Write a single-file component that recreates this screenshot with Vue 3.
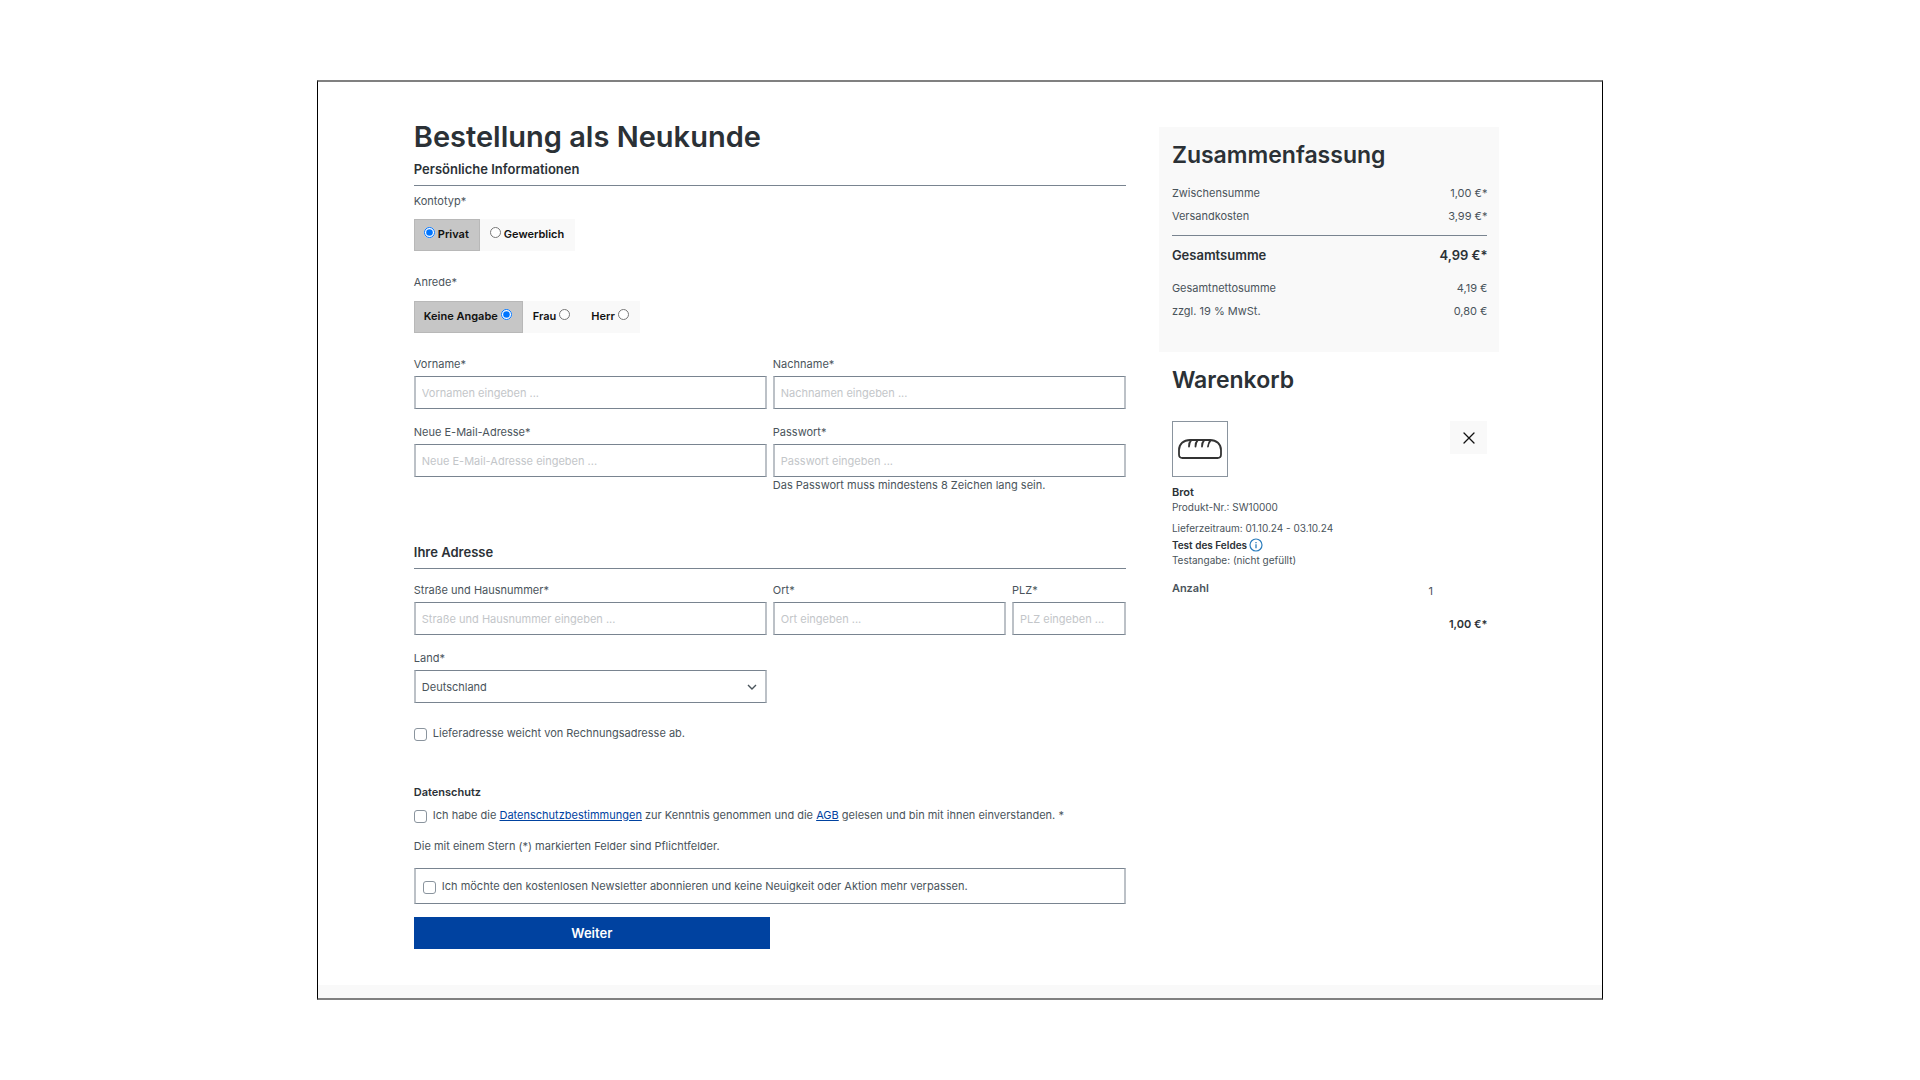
<script setup>
import { ref } from 'vue'

const accountType = ref('privat')
const salutation = ref('keine')
const country = ref('de')

const accountTypes = [
  { value: 'privat', label: 'Privat' },
  { value: 'gewerblich', label: 'Gewerblich' },
]
const salutations = [
  { value: 'keine', label: 'Keine Angabe' },
  { value: 'frau', label: 'Frau' },
  { value: 'herr', label: 'Herr' },
]
</script>

<template>
  <div class="frame">
    <div class="page">
      <main class="checkout">
        <h1>Bestellung als Neukunde</h1>
        <form @submit.prevent>
          <section>
            <h2>Persönliche Informationen</h2>

            <fieldset class="choice">
              <legend>Kontotyp*</legend>
              <div class="segments">
                <label v-for="t in accountTypes" :key="t.value" :class="{ active: accountType === t.value }">
                  <input v-model="accountType" type="radio" name="accountType" :value="t.value" />
                  <span>{{ t.label }}</span>
                </label>
              </div>
            </fieldset>

            <fieldset class="choice second">
              <legend>Anrede*</legend>
              <div class="segments trailing">
                <label v-for="s in salutations" :key="s.value" :class="{ active: salutation === s.value }">
                  <span>{{ s.label }}</span>
                  <input v-model="salutation" type="radio" name="salutation" :value="s.value" />
                </label>
              </div>
            </fieldset>

            <div class="fields personal">
              <div class="field">
                <label for="firstName">Vorname*</label>
                <input id="firstName" type="text" placeholder="Vornamen eingeben ..." />
              </div>
              <div class="field">
                <label for="lastName">Nachname*</label>
                <input id="lastName" type="text" placeholder="Nachnamen eingeben ..." />
              </div>
              <div class="field">
                <label for="email">Neue E-Mail-Adresse*</label>
                <input id="email" type="email" placeholder="Neue E-Mail-Adresse eingeben ..." />
              </div>
              <div class="field">
                <label for="password">Passwort*</label>
                <input id="password" type="password" placeholder="Passwort eingeben ..." aria-describedby="passwordHelp" />
                <p id="passwordHelp" class="help">Das Passwort muss mindestens 8 Zeichen lang sein.</p>
              </div>
            </div>
          </section>

          <section class="address">
            <h2>Ihre Adresse</h2>
            <div class="fields">
              <div class="field">
                <label for="street">Straße und Hausnummer*</label>
                <input id="street" type="text" placeholder="Straße und Hausnummer eingeben ..." />
              </div>
              <div class="town">
                <div class="field">
                  <label for="city">Ort*</label>
                  <input id="city" type="text" placeholder="Ort eingeben ..." />
                </div>
                <div class="field">
                  <label for="zip">PLZ*</label>
                  <input id="zip" type="text" placeholder="PLZ eingeben ..." />
                </div>
              </div>
              <div class="field">
                <label for="country">Land*</label>
                <div class="select">
                  <select id="country" v-model="country">
                    <option value="de">Deutschland</option>
                  </select>
                  <svg viewBox="0 0 10 6" width="10" height="6" aria-hidden="true">
                    <path d="M1 1l4 4 4-4" fill="none" stroke="#4a545b" stroke-width="1.4" />
                  </svg>
                </div>
              </div>
            </div>
            <div class="check delivery">
              <input id="delivery" type="checkbox" />
              <label for="delivery">Lieferadresse weicht von Rechnungsadresse ab.</label>
            </div>
          </section>

          <section class="privacy">
            <h3>Datenschutz</h3>
            <div class="check">
              <input id="privacy" type="checkbox" />
              <label for="privacy">Ich habe die <a href="#datenschutz">Datenschutzbestimmungen</a> zur Kenntnis genommen und die <a href="#agb">AGB</a> gelesen und bin mit ihnen einverstanden. *</label>
            </div>
            <p class="required">Die mit einem Stern (*) markierten Felder sind Pflichtfelder.</p>
            <div class="check newsletter">
              <input id="newsletter" type="checkbox" />
              <label for="newsletter">Ich möchte den kostenlosen Newsletter abonnieren und keine Neuigkeit oder Aktion mehr verpassen.</label>
            </div>
            <button type="submit" class="submit">Weiter</button>
          </section>
        </form>
      </main>

      <aside>
        <section class="summary">
          <h2>Zusammenfassung</h2>
          <dl>
            <div><dt>Zwischensumme</dt><dd>1,00 €*</dd></div>
            <div><dt>Versandkosten</dt><dd>3,99 €*</dd></div>
            <div class="total"><dt>Gesamtsumme</dt><dd>4,99 €*</dd></div>
            <div><dt>Gesamtnettosumme</dt><dd>4,19 €</dd></div>
            <div><dt>zzgl. 19 % MwSt.</dt><dd>0,80 €</dd></div>
          </dl>
        </section>

        <section class="cart">
          <h2>Warenkorb</h2>
          <div class="item-top">
            <div class="thumb">
              <svg viewBox="0 0 44 20" width="44" height="20" role="img" aria-label="Brot">
                <g fill="none" stroke="#333" stroke-width="1.8" stroke-linecap="round">
                  <path d="M12 1h20c6.500 0 11 4 11 10v4.500q0 3.500-3.500 3.500h-35Q1 19 1 15.500V11C1 5 5.500 1 12 1z" />
                  <path d="M13 1.500q-2 2-2 6M19.500 1.500q-2 2-2 6M26 1.500q-2 2-2 6M32.500 1.500q-2 2-2.500 6" />
                </g>
              </svg>
            </div>
            <button type="button" class="remove" aria-label="Entfernen">
              <svg viewBox="0 0 12 12" width="12" height="12" aria-hidden="true">
                <path d="M1 1l10 10M11 1L1 11" stroke="#111" stroke-width="1.3" stroke-linecap="round" />
              </svg>
            </button>
          </div>
          <h3>Brot</h3>
          <p class="small">Produkt-Nr.: SW10000</p>
          <p class="small period">Lieferzeitraum: 01.10.24 - 03.10.24</p>
          <p class="test">
            Test des Feldes
            <svg viewBox="0 0 14 14" width="14" height="14" aria-hidden="true">
              <circle cx="7" cy="7" r="6" fill="none" stroke="#2b7dbd" stroke-width="1.2" />
              <path d="M7 6.200v4M7 4v1.200" stroke="#2b7dbd" stroke-width="1.300" />
            </svg>
          </p>
          <p class="small">Testangabe: (nicht gefüllt)</p>
          <div class="quantity">
            <span class="name">Anzahl</span>
            <span class="count">1</span>
          </div>
          <p class="price">1,00 €*</p>
        </section>
      </aside>
    </div>
    <footer></footer>
  </div>
</template>

<style>
body {
  margin: 0;
  background: #fff;
}
</style>

<style scoped>
.frame,
.frame * {
  box-sizing: border-box;
}
.frame {
  margin: 80px auto;
  width: 67%;
  border: solid;
  border-width: 2px 1px;
  border-color: #808080 #000;
  font: 11px/16px Inter, "Liberation Sans", sans-serif;
  color: #4a545b;
}
.page {
  display: flex;
  gap: 33px;
  padding: 37px 8% 36px 96px;
}
.checkout {
  flex: 713 1 0;
  min-width: 0;
}
aside {
  flex: 341 1 0;
  min-width: 0;
  padding-top: 8px;
}
h1,
h2,
h3,
p,
dl,
dd {
  margin: 0;
}
h1,
h2,
h3 {
  font-weight: 600;
  color: #2b3136;
}
h1 {
  font-size: 29px;
  line-height: 36px;
}
.checkout h2 {
  margin-top: 4px;
  padding-bottom: 6px;
  border-bottom: 1px solid #798490;
  font-size: 13px;
  line-height: 20px;
}
fieldset {
  margin: 7px 0 0;
  padding: 0;
  border: 0;
  min-width: 0;
}
legend {
  padding: 0;
}
.choice.second {
  margin-top: 23px;
}
.segments {
  display: flex;
  margin-top: 10px;
}
.segments.trailing {
  margin-top: 11px;
}
.segments label {
  display: flex;
  gap: 3px;
  height: 32px;
  padding: 6px 10px 8px 9px;
  border: 1px solid #f9f9f9;
  background: #f9f9f9;
  color: #111;
  font-weight: 600;
}
.segments label.active {
  border-color: #b8b8b8;
  background: #c6c6c6;
}
.segments input {
  width: 11px;
  height: 11px;
  margin: 1px 0 0;
}
.fields {
  display: grid;
  grid-template-columns: 1fr 1fr;
  gap: 15px 6px;
  margin-top: 13px;
}
.fields.personal {
  margin-top: 23px;
}
.town {
  display: grid;
  grid-template-columns: 43fr 21fr;
  gap: 6px;
}
.field {
  display: flex;
  flex-direction: column;
  min-width: 0;
}
.field > label {
  margin-bottom: 4px;
}
.field input,
.select select {
  width: 100%;
  height: 33px;
  margin: 0;
  padding: 0 6px;
  border: solid;
  border-width: 1px 2px;
  border-color: #798490 #bcc1c7;
  border-radius: 0;
  background: #fff;
  font: inherit;
  color: inherit;
  appearance: none;
}
.field input::placeholder {
  color: #c3c6c9;
  opacity: 1;
}
.select {
  display: grid;
  align-items: center;
}
.select select,
.select svg {
  grid-area: 1 / 1;
}
.select svg {
  justify-self: end;
  margin-right: 10px;
  pointer-events: none;
}
.address {
  margin-top: 49px;
}
.address h2 {
  margin-top: 0;
}
.check {
  display: flex;
  gap: 6px;
}
.check input {
  flex: none;
  width: 13px;
  height: 13px;
  margin: 3px 0 0;
  border: 1px solid #8a949e;
  border-radius: 3px;
  background: #fff;
  appearance: none;
}
.delivery {
  margin-top: 22px;
}
.privacy {
  margin-top: 43px;
}
.privacy h3 {
  margin-bottom: 7px;
  font-size: 11px;
}
a {
  color: #0042a0;
  text-decoration: underline;
}
.required {
  margin: 15px 0 14px;
}
.newsletter {
  padding: 9px 7px;
  border: solid;
  border-width: 1px 2px;
  border-color: #798490 #bcc1c7;
}
.submit {
  display: block;
  width: 50%;
  height: 32px;
  margin-top: 13px;
  padding: 0;
  border: 0;
  background: #0042a0;
  color: #fff;
  font: 600 13px/32px Inter, "Liberation Sans", sans-serif;
}
.summary {
  padding: 12px 12px 26px 13px;
  background: #f9f9f9;
}
aside h2 {
  font-size: 23px;
  line-height: 32px;
}
dl {
  margin-top: 14px;
}
dl > div {
  display: flex;
  justify-content: space-between;
  margin-bottom: 7px;
}
dl > .total {
  margin: 11px 0 17px;
  padding-top: 11px;
  border-top: 1px solid #798490;
  font-size: 13px;
  font-weight: 600;
  color: #2b3136;
}
.cart {
  padding: 12px 12px 0 13px;
}
.item-top {
  display: flex;
  justify-content: space-between;
  align-items: flex-start;
  margin-top: 25px;
}
.thumb {
  display: flex;
  align-items: center;
  justify-content: center;
  width: 56px;
  height: 56px;
  border: 1px solid #8a949e;
}
.remove {
  display: flex;
  align-items: center;
  justify-content: center;
  width: 37px;
  height: 33px;
  padding: 0;
  border: 0;
  background: #f9f9f9;
}
.cart h3 {
  margin-top: 7px;
  font-size: 11px;
}
.small,
.test {
  font-size: 10px;
  line-height: 14px;
}
.period {
  margin-top: 7px;
}
.test {
  display: flex;
  align-items: center;
  gap: 2px;
  margin: 3px 0 1px;
  font-weight: 600;
  color: #2b3136;
}
.quantity {
  display: flex;
  margin-top: 13px;
}
.quantity .name {
  flex: 1;
  font-weight: 600;
}
.quantity .count {
  width: 59px;
  padding-top: 3px;
}
.price {
  margin-top: 17px;
  font-weight: 600;
  color: #2b3136;
  text-align: right;
}
footer {
  height: 13px;
  background: #f9f9f9;
}
</style>
